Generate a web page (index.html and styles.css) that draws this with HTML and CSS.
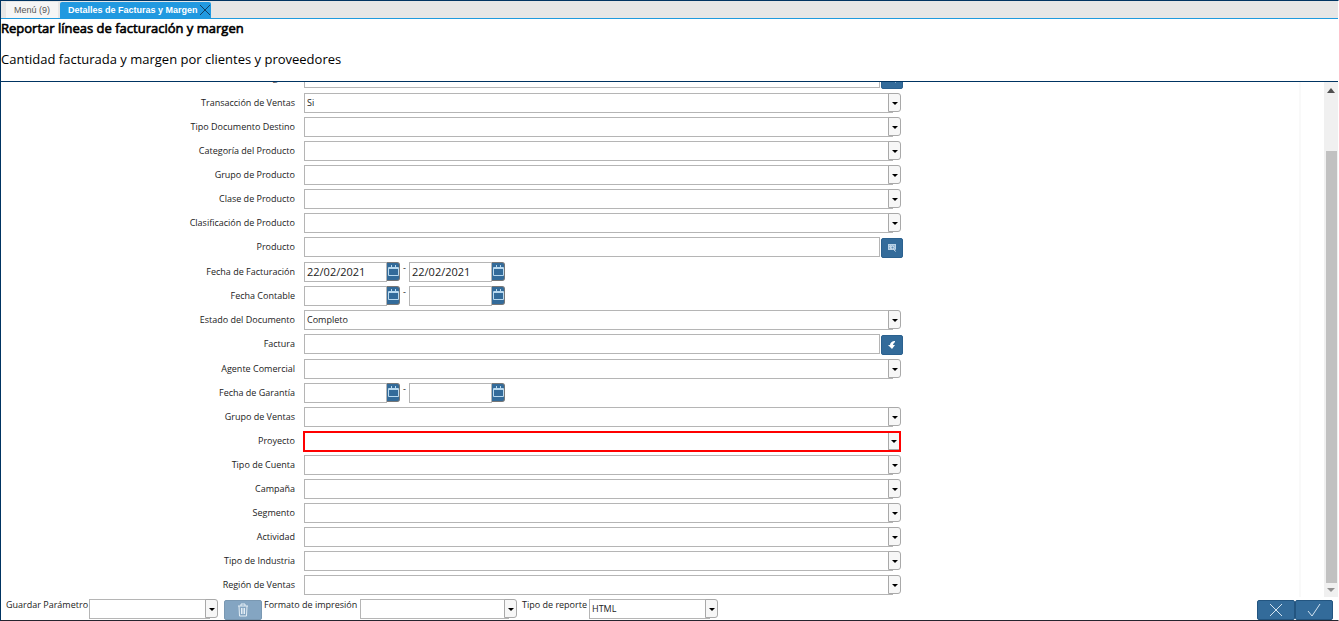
FILE: index.html
```html
<!DOCTYPE html>
<html lang="es">
<head>
<meta charset="utf-8">
<title>Detalles de Facturas y Margen</title>
<link rel="stylesheet" href="styles.css">
</head>
<body>
<div class="app">
  <nav class="tabs">
    <button class="tab" type="button">Menú (9)</button>
    <div class="tab active"><button class="tab-name" type="button">Detalles de Facturas y Margen</button><button class="tab-close" type="button" aria-label="Cerrar"><svg width="12" height="12" viewBox="0 0 12 12"><path d="M1 1L11 11M11 1L1 11"/></svg></button></div>
  </nav>
  <header class="heading">
    <h1>Reportar líneas de facturación y margen</h1>
    <p>Cantidad facturada y margen por clientes y proveedores</p>
  </header>
  <main class="viewport">
    <form class="params" id="params"></form>
    <div class="scrollbar" aria-hidden="true"><i class="up"></i><i class="thumb"></i><i class="down"></i></div>
  </main>
  <footer class="actions">
    <label class="save-label" for="save">Guardar Parámetro</label>
    <div class="combo save"><select id="save"><option></option></select><i class="drop"></i></div>
    <button class="action trash" type="button" aria-label="Eliminar" disabled><svg width="12" height="14" viewBox="0 0 12 14"><path d="M1 3H11M4 3V1H8V3M2 3L2.5 13H9.500L10 3M4.500 5V11M6 5V11M7.500 5V11"/></svg></button>
    <label class="format-label" for="format">Formato de impresión</label>
    <div class="combo format"><select id="format"><option></option></select><i class="drop"></i></div>
    <label class="type-label" for="type">Tipo de reporte</label>
    <div class="combo type"><select id="type"><option>HTML</option></select><i class="drop"></i></div>
    <div class="confirm">
      <button class="action" type="button" aria-label="Cancelar"><svg width="14" height="14" viewBox="0 0 14 14"><path d="M1 1L13 13M13 1L1 13"/></svg></button><button class="action" type="button" aria-label="Aceptar"><svg width="14" height="14" viewBox="0 0 14 14"><path d="M1 8L5 13L13 1"/></svg></button>
    </div>
  </footer>
</div>
<script src="form.js"></script>
</body>
</html>
```
FILE: styles.css
```css
* { box-sizing: border-box; }
body { margin: 0; font: 9px/12px "Open Sans", "Noto Sans", sans-serif; color: #222; background: #fff; }
button, select, input { font: inherit; color: inherit; margin: 0; }
button { border: 0; padding: 0; }
.app { display: flex; flex-direction: column; height: 100vh; overflow: hidden; border: 1px solid #003462; border-right-color: #fff; border-bottom-color: #25252f; }

.tabs { display: flex; flex: none; gap: 2px; height: 18px; padding: 1px 5px 0; background: #e6e6e6; border-bottom: 1px solid #1f9ade; font-family: "Liberation Sans", Arial, sans-serif; }
.tab { display: flex; align-items: center; justify-content: center; width: 52px; height: 16px; color: #555; background: #f5f5f5; }
.tab.active { justify-content: space-between; width: 151px; padding: 0 0 0 8px; color: #fff; background: #2199e0; border-radius: 2px 2px 0 0; font-weight: bold; }
.tab-name, .tab-close { background: none; white-space: nowrap; }
.tab-close { display: flex; }
.tab-close path { fill: none; stroke: #123f63; stroke-width: 1; }

.heading { flex: none; height: 63px; border-bottom: 1px solid #003462; color: #000; font-size: 13px; line-height: 18px; }
.heading h1 { margin: 0; font-size: 13px; font-weight: 400; -webkit-text-stroke: 0.6px #000; }
.heading p { margin: 13px 0 0; }

.viewport { display: flex; flex: 1; min-height: 0; overflow: hidden; }
.params { flex: 1; margin: -14px 23px 0 0; border-right: 2px solid #f9f9f9; }
.row { display: grid; grid-template-columns: 303fr 600fr 395fr; height: 24px; }
.row.lookup { height: 25px; }
.row > label { padding: 4px 9px 0 0; text-align: right; }
.field { display: flex; gap: 1px; min-width: 0; }
.field input, .combo select { height: 20px; min-width: 0; padding: 0 2px; border: 1px solid #b5b5b5; border-radius: 0; background: #fff; outline: 0; }
.field input { flex: 1; }
.combo { position: relative; flex: 1; height: 20px; margin-right: 3px; }
.combo select { display: block; width: calc(100% - 8px); appearance: none; }
.drop { position: absolute; top: 0; right: 0; width: 13px; height: 19px; border: 1px solid #a9a9a9; border-radius: 0 3px 3px 0; background: #f7f7f7; pointer-events: none; }
.drop::after { content: ""; position: absolute; left: 3px; top: 8px; border: 3px solid transparent; border-top-color: #000; border-bottom: 0; }
.combo.required { height: 21px; margin: 0 3px 0 -1px; border: 2px solid #f00; }
.combo.required select { width: 100%; height: 17px; border: 0; }
.combo.required .drop { height: 17px; width: 11px; border-width: 0 0 1px 1px; border-radius: 0; }
.combo.required .drop::after { left: 2px; top: 7px; }
.lookup-button { display: flex; align-items: center; justify-content: center; width: 22px; height: 20px; margin: 1px 1px 0 0; border: 1px solid #2b618f; border-radius: 2px; background: #336b9a; }
.dates { gap: 0; }
.field .date { flex: none; width: 83px; padding-bottom: 1px; font-size: 11px; }
.date-button { display: flex; justify-content: center; width: 13px; height: 19px; padding-top: 2px; border: 1px solid #777; border-left: 0; border-radius: 0 3px 3px 0; background: #336b9a; }
.date-button path { fill: none; stroke: #b9d9ef; }
.dash { width: 9px; text-align: center; }

.scrollbar { display: flex; flex-direction: column; align-items: center; width: 14px; padding: 6px 0 5px; background: #f0f0f0; }
.up { border: 4px solid transparent; border-top: 0; border-bottom: 5px solid #505050; }
.thumb { width: 11px; flex: 1; margin: 58px 0 5px; background: #c1c1c1; }
.down { border: 4px solid transparent; border-bottom: 0; border-top: 4px solid #909090; }

.actions { display: flex; flex: none; height: 23px; padding: 2px 5px 0; background: #fff; }
.actions label { flex: none; white-space: nowrap; }
.save-label { width: 83px; }
.format-label { width: 96px; }
.type-label { width: 67px; }
.actions .combo { flex: none; margin: 0; }
.actions .save { width: 129px; margin-right: 6px; }
.actions .format { width: 157px; margin-right: 5px; }
.actions .type { width: 129px; }
.action { display: flex; align-items: center; justify-content: center; width: 38px; height: 20px; margin-top: 1px; border: 1px solid #235580; border-radius: 2px; background: #336b9a; }
.action path { fill: none; stroke: #d4e4f1; stroke-width: 1; }
.action.trash { margin-right: 2px; opacity: .6; }
.confirm { display: flex; margin-left: auto; }
```
FILE: form.js
```js
const rows = [
  ["Socio del Negocio", "grid"], ["Transacción de Ventas", "combo", "Si"], ["Tipo Documento Destino", "combo"],
  ["Categoría del Producto", "combo"], ["Grupo de Producto", "combo"], ["Clase de Producto", "combo"],
  ["Clasificación de Producto", "combo"], ["Producto", "grid"], ["Fecha de Facturación", "dates", "22/02/2021"],
  ["Fecha Contable", "dates"], ["Estado del Documento", "combo", "Completo"], ["Factura", "zoom"],
  ["Agente Comercial", "combo"], ["Fecha de Garantía", "dates"], ["Grupo de Ventas", "combo"],
  ["Proyecto", "required"], ["Tipo de Cuenta", "combo"], ["Campaña", "combo"], ["Segmento", "combo"],
  ["Actividad", "combo"], ["Tipo de Industria", "combo"], ["Región de Ventas", "combo"]
];
const icons = {
  grid: '<svg width="8" height="8" viewBox="0 0 8 8"><path d="M0 0H8V6H0Z" fill="#8fb3d1"/><path d="M0 .5H8M0 2.500H3M0 5.500H4M.5 0V6M2.500 0V6M7.500 0V5" stroke="#b9d2e6" fill="none"/><circle cx="4.500" cy="3.500" r="1.500" fill="#5f90b9" stroke="#dce9f4"/><path d="M5.500 5L7.500 7.500" stroke="#dce9f4"/></svg>',
  zoom: '<svg width="8" height="10" viewBox="0 0 8 10"><path d="M7 1C4 1 2 3 2 5H0L4 9L7 5H5C5 4 6 3 7 2Z" fill="#fff"/></svg>'
};
const calendar = '<svg width="11" height="12" viewBox="0 0 11 12"><path d="M.5 2.500H10.500V10.500H.5ZM1 3.500H10M3.500 0V4M7.500 0V4"/></svg>';
const date = (id, value, name) => `<input class="date" id="${id}" value="${value}" aria-label="${name}"><button class="date-button" type="button" aria-label="Calendario">${calendar}</button>`;

document.getElementById("params").innerHTML = rows.map(([name, kind, value = ""], i) => {
  const id = "p" + i;
  let field;
  if (kind === "dates") {
    field = `<div class="field dates">${date(id, value, name)}<span class="dash">-</span>${date(id + "to", value, name + " hasta")}</div>`;
  } else if (icons[kind]) {
    field = `<div class="field"><input id="${id}"><button class="lookup-button" type="button" aria-label="Buscar">${icons[kind]}</button></div>`;
  } else {
    field = `<div class="field"><div class="combo ${kind}"><select id="${id}"><option>${value}</option></select><i class="drop"></i></div></div>`;
  }
  return `<div class="row ${icons[kind] ? "lookup" : ""}"><label for="${id}">${name}</label>${field}</div>`;
}).join("");
```
